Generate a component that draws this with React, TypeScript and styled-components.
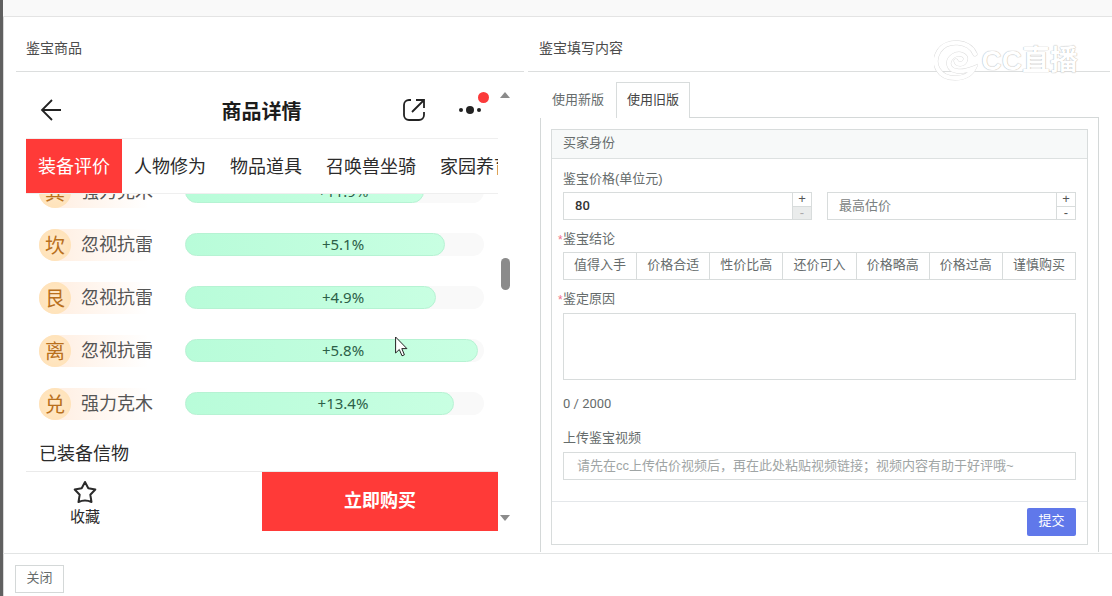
import React, { useState } from "react";
import styled, { createGlobalStyle } from "styled-components";

const GlobalStyle = createGlobalStyle`
  *, *::before, *::after { box-sizing: border-box; }
  body {
    margin: 0;
    background: #fff;
    font-family: "Liberation Sans", "Noto Sans CJK SC", sans-serif;
    font-size: 13px;
    line-height: 20px;
    color: #666c6c;
  }
  button, input, textarea { font: inherit; color: inherit; margin: 0; }
  button { cursor: pointer; }
`;

const Dialog = styled.div`
  display: flex;
  flex-direction: column;
  height: 100vh;
  border-left: 3px solid #606060;
  box-shadow: inset 1px 0 0 #d8d8d8;
`;

const TitleBar = styled.header`
  flex: none;
  height: 17px;
  background: #f9f9f9;
  border-bottom: 1px solid #e4e4e4;
`;

const Body = styled.main`
  position: relative;
  flex: 1;
  min-height: 0;
  display: grid;
  grid-template-columns: 508fr 582fr;
  gap: 4px;
  padding: 0 2px 0 13px;
  overflow: hidden;
`;

const Column = styled.section`
  min-width: 0;
  min-height: 0;
  display: flex;
  flex-direction: column;
`;

const ColumnTitle = styled.h2<{ $indent: number }>`
  flex: none;
  margin: 0;
  height: 55px;
  padding: 21px 0 0 ${(p) => p.$indent}px;
  border-bottom: 1px solid #dcdede;
  font-size: 14px;
  font-weight: 400;
  line-height: 20px;
  color: #4c4c4c;
`;

const PhoneFrame = styled.div`
  flex: 1;
  min-height: 0;
  display: flex;
  padding: 8px 12px 22px 10px;
`;

const Phone = styled.div`
  position: relative;
  flex: 1;
  min-width: 0;
  display: flex;
  flex-direction: column;
  font-family: "Noto Sans", "Noto Sans CJK SC", sans-serif;
  font-size: 18px;
  line-height: 26px;
  color: #2b2b2b;
`;

const PhoneBar = styled.div`
  flex: none;
  display: grid;
  grid-template-columns: 1fr auto 1fr;
  align-items: center;
  height: 59px;
  padding: 1px 15px 0 14px;
  border-bottom: 1px solid #efefef;
`;

const PhoneTitle = styled.h3`
  margin: 0;
  padding-top: 4px;
  font-size: 20px;
  font-weight: 700;
  line-height: 28px;
  color: #1c1c1c;
`;

const IconButton = styled.button`
  position: relative;
  display: flex;
  padding: 0;
  border: 0;
  background: none;
  color: #222;
`;

const PhoneActions = styled.div`
  display: flex;
  justify-content: flex-end;
  align-items: center;
  gap: 31px;
`;

const RedDot = styled.span`
  position: absolute;
  top: -10px;
  right: -6px;
  width: 11px;
  height: 11px;
  border-radius: 50%;
  background: #fb3a3a;
`;

const PhoneTabs = styled.nav`
  flex: none;
  display: flex;
  height: 55px;
  overflow: hidden;
  border-bottom: 1px solid #efefef;
`;

const PhoneTab = styled.button<{ $active?: boolean }>`
  flex: none;
  padding: 0 12px;
  border: 0;
  white-space: nowrap;
  background: ${(p) => (p.$active ? "#ff3a38" : "transparent")};
  color: ${(p) => (p.$active ? "#fff" : "#2b2b2b")};
`;

const StatList = styled.div`
  flex: 1;
  min-height: 0;
  display: flex;
  flex-direction: column;
  justify-content: flex-end;
  overflow: hidden;
  padding: 0 14px 0 13px;
`;

const StatRow = styled.div`
  flex: none;
  display: flex;
  align-items: center;
  height: 53px;
`;

const StatName = styled.div`
  flex: none;
  display: flex;
  align-items: center;
  gap: 10px;
  width: 146px;
  height: 32px;
  border-radius: 16px;
  background: linear-gradient(to right, #fff1e6 20%, #fff 75%);
  line-height: 32px;
  color: #555;
`;

const StatLabel = styled.span`
  padding-bottom: 2px;
`;

const Trigram = styled.span`
  width: 32px;
  height: 32px;
  padding-top: 1px;
  border-radius: 50%;
  background: radial-gradient(#ffe9c8, #ffe0b4);
  text-align: center;
  font-size: 20px;
  line-height: 32px;
  color: #b9701c;
`;

const Track = styled.div`
  position: relative;
  flex: 1;
  height: 23px;
  border-radius: 12px;
  background: #f9f9f9;
`;

const Fill = styled.div`
  height: 100%;
  border: 1px solid #b6f3d3;
  border-radius: 12px;
  background: linear-gradient(to right, #b8fcd9, #c8ffe2);
`;

const Percent = styled.span`
  position: absolute;
  inset: 0;
  padding-left: 17px;
  text-align: center;
  font-size: 15px;
  line-height: 23px;
  color: #2c6048;
`;

const SubHeading = styled.h4`
  flex: none;
  margin: 0;
  height: 41px;
  padding-top: 10px;
  font-size: 18px;
  font-weight: 400;
`;

const BuyBar = styled.div`
  flex: none;
  display: grid;
  grid-template-columns: 1fr 1fr;
  height: 60px;
  border-top: 1px solid #eaeaea;
`;

const Favourite = styled.button`
  justify-self: start;
  display: flex;
  flex-direction: column;
  align-items: center;
  gap: 2px;
  width: 118px;
  padding: 8px 0 0;
  border: 0;
  background: none;
  font-size: 15px;
  line-height: 20px;
`;

const BuyButton = styled.button`
  padding: 0 0 3px;
  border: 0;
  background: #ff3a38;
  color: #fff;
  font-weight: 700;
`;

const Cursor = styled.svg`
  position: absolute;
  left: 369px;
  top: 256px;
`;

const Scrollbar = styled.div`
  flex: none;
  display: flex;
  flex-direction: column;
  align-items: center;
  width: 14px;
  padding: 12px 0 10px;
`;

const Gap = styled.span<{ $grow: number }>`
  flex: ${(p) => p.$grow};
`;

const Thumb = styled.span`
  width: 9px;
  height: 32px;
  border-radius: 5px;
  background: #8b8b8b;
`;

const FormArea = styled.div`
  flex: 1;
  min-height: 0;
  display: flex;
  flex-direction: column;
  padding: 10px 11px 1px 12px;
  overflow: hidden;
`;

const Tabs = styled.div`
  flex: none;
  display: flex;
  height: 36px;
`;

const Tab = styled.button<{ $active?: boolean }>`
  position: relative;
  z-index: ${(p) => (p.$active ? 1 : 0)};
  width: ${(p) => (p.$active ? 74 : 76)}px;
  padding: 0 0 2px;
  border: 1px solid ${(p) => (p.$active ? "#d8dcdc" : "transparent")};
  border-bottom: 0;
  background: #fff;
  color: ${(p) => (p.$active ? "#444" : "#666c6c")};
`;

const TabPanel = styled.div`
  flex: 1;
  min-height: 0;
  margin-top: -1px;
  padding: 11px 10px 0;
  border: 1px solid #d4d8d8;
  border-bottom: 0;
`;

const Card = styled.form`
  border: 1px solid #d8dcdc;
`;

const CardHeader = styled.div`
  height: 29px;
  padding: 3px 11px;
  background: #f7f9f9;
  border-bottom: 1px solid #dde1e1;
`;

const Fields = styled.div`
  padding: 10px 11px 21px;
`;

const Label = styled.label<{ $required?: boolean }>`
  position: relative;
  display: block;
  height: 20px;
  &::before {
    content: "${(p) => (p.$required ? "*" : "")}";
    position: absolute;
    left: -5px;
    top: 1px;
    color: #f0708a;
    font-size: 12px;
  }
`;

const PriceRow = styled.div`
  display: grid;
  grid-template-columns: 1fr 1fr;
  gap: 15px;
  margin: 3px 0 9px;
`;

const NumberBox = styled.div`
  display: flex;
  height: 28px;
  border: 1px solid #d8dcdc;
`;

const NumberInput = styled.input`
  flex: 1;
  min-width: 0;
  padding: 0 11px;
  border: 0;
  outline: 0;
  background: none;
  font-family: Roboto, "Noto Sans CJK SC", sans-serif;
  font-weight: 500;
  color: #333;
  &::placeholder { color: #7c8282; opacity: 1; font-weight: 400; }
`;

const Steps = styled.div`
  display: flex;
  flex-direction: column;
  width: 19px;
  border-left: 1px solid #d8dcdc;
`;

const Step = styled.button<{ $muted?: boolean }>`
  flex: 1;
  padding: 0;
  border: 0;
  background: ${(p) => (p.$muted ? "#eaecec" : "transparent")};
  color: ${(p) => (p.$muted ? "#aaa" : "#555")};
  line-height: 12px;
  & + & { border-top: 1px solid #d8dcdc; }
`;

const Choices = styled.div`
  display: flex;
  margin: 3px 0 9px;
  border: 1px solid #d8dcdc;
`;

const Choice = styled.button<{ $selected?: boolean }>`
  flex: 1;
  height: 26px;
  padding: 0 0 2px;
  border: 0;
  background: ${(p) => (p.$selected ? "#eef1ff" : "#fff")};
  white-space: nowrap;
  & + & { border-left: 1px solid #d8dcdc; }
`;

const Reason = styled.textarea`
  display: block;
  width: 100%;
  height: 67px;
  margin: 4px 0 14px;
  padding: 4px 11px;
  border: 1px solid #d8dcdc;
  outline: 0;
  resize: none;
`;

const Counter = styled.div`
  margin-bottom: 14px;
  font-family: Roboto, sans-serif;
`;

const LinkInput = styled.input`
  display: block;
  width: 100%;
  height: 28px;
  margin-top: 4px;
  padding: 0 13px 2px;
  border: 1px solid #d8dcdc;
  outline: 0;
  &::placeholder { color: #a0a5a5; opacity: 1; }
`;

const CardFooter = styled.div`
  display: flex;
  justify-content: flex-end;
  padding: 6px 11px 8px;
  border-top: 1px solid #e4e7ea;
`;

const Submit = styled.button`
  width: 49px;
  height: 28px;
  padding: 0 0 2px;
  border: 0;
  border-radius: 2px;
  background: #6078ea;
  color: #fff;
`;

const DialogFooter = styled.footer`
  flex: none;
  height: 43px;
  padding: 11px 12px 0;
  border-top: 1px solid #e2e4e4;
`;

const CloseButton = styled.button`
  width: 49px;
  height: 28px;
  padding: 0 0 3px;
  border: 1px solid #d4d8d8;
  background: #fff;
`;

const Watermark = styled.div`
  position: absolute;
  top: 22px;
  right: 34px;
  display: flex;
  align-items: center;
  gap: 4px;
  height: 44px;
  font-size: 28px;
  font-weight: 700;
  line-height: 36px;
  color: #fff;
  text-shadow: 0 0 1px #aaa, 0 0 1px #ccc;
  pointer-events: none;
`;

const stats = [
  { gua: "巽", name: "强力克木", value: "+11.9%", fill: 80 },
  { gua: "坎", name: "忽视抗雷", value: "+5.1%", fill: 87 },
  { gua: "艮", name: "忽视抗雷", value: "+4.9%", fill: 84 },
  { gua: "离", name: "忽视抗雷", value: "+5.8%", fill: 98 },
  { gua: "兑", name: "强力克木", value: "+13.4%", fill: 90 },
];

const phoneTabs = ["装备评价", "人物修为", "物品道具", "召唤兽坐骑", "家园养育"];
const verdicts = ["值得入手", "价格合适", "性价比高", "还价可入", "价格略高", "价格过高", "谨慎购买"];

function ProductPanel() {
  return (
    <Column>
      <ColumnTitle $indent={10}>鉴宝商品</ColumnTitle>
      <PhoneFrame>
        <Phone>
          <PhoneBar>
            <IconButton type="button" aria-label="返回">
              <svg width="22" height="22" viewBox="0 0 22 22" fill="none" stroke="currentColor" strokeWidth="1.8">
                <path d="M21 11H2M12 1 2 11l10 10" />
              </svg>
            </IconButton>
            <PhoneTitle>商品详情</PhoneTitle>
            <PhoneActions>
              <IconButton type="button" aria-label="分享">
                <svg width="24" height="24" viewBox="0 0 24 24" fill="none" stroke="currentColor" strokeWidth="1.800">
                  <path d="M9 2H7a5 5 0 0 0-5 5v10a5 5 0 0 0 5 5h10a5 5 0 0 0 5-5v-3M14 2h8v8M22 2 10 14" />
                </svg>
              </IconButton>
              <IconButton type="button" aria-label="更多">
                <svg width="26" height="16" viewBox="0 0 26 16" fill="currentColor">
                  <circle cx="4" cy="8" r="2" />
                  <circle cx="13" cy="8" r="4" />
                  <circle cx="22" cy="8" r="2" />
                </svg>
                <RedDot />
              </IconButton>
            </PhoneActions>
          </PhoneBar>
          <PhoneTabs>
            {phoneTabs.map((t, i) => (
              <PhoneTab key={t} type="button" $active={i === 0}>{t}</PhoneTab>
            ))}
          </PhoneTabs>
          <StatList>
            {stats.map((s) => (
              <StatRow key={s.gua}>
                <StatName>
                  <Trigram>{s.gua}</Trigram>
                  <StatLabel>{s.name}</StatLabel>
                </StatName>
                <Track>
                  <Fill style={{ width: `${s.fill}%` }} />
                  <Percent>{s.value}</Percent>
                </Track>
              </StatRow>
            ))}
            <SubHeading>已装备信物</SubHeading>
          </StatList>
          <BuyBar>
            <Favourite type="button">
              <svg width="24" height="24" viewBox="0 0 24 24" fill="none" stroke="currentColor" strokeWidth="2" strokeLinejoin="round">
                <path d="m12 2 3.300 6.300 7 1.200-5 5.200 1.200 7.300c-4.300-1.900-8.700-1.900-13 0l1.200-7.300-5-5.200 7-1.200z" />
              </svg>
              收藏
            </Favourite>
            <BuyButton type="button">立即购买</BuyButton>
          </BuyBar>
          <Cursor width="13" height="21" viewBox="0 0 13 21" fill="#fff" stroke="#222" strokeWidth="1">
            <path d="M.6 1v16l3.700-3.500 2.700 6.300 2.400-1-2.600-6.200h5.100z" />
          </Cursor>
        </Phone>
        <Scrollbar aria-hidden="true">
          <svg width="10" height="6" viewBox="0 0 10 6"><path d="M0 6 5 0l5 6z" fill="#8b8b8b" /></svg>
          <Gap $grow={160} />
          <Thumb />
          <Gap $grow={226} />
          <svg width="10" height="6" viewBox="0 0 10 6"><path d="M0 0h10L5 6z" fill="#8b8b8b" /></svg>
        </Scrollbar>
      </PhoneFrame>
    </Column>
  );
}

function AppraisalPanel() {
  const [low, setLow] = useState("80");
  const [high, setHigh] = useState("");
  const [verdict, setVerdict] = useState("");
  const [reason, setReason] = useState("");
  const step = (v: string, d: number) => String(Math.max(0, Number(v || 0) + d));

  return (
    <Column>
      <ColumnTitle $indent={11}>鉴宝填写内容</ColumnTitle>
      <FormArea>
        <Tabs>
          <Tab type="button">使用新版</Tab>
          <Tab type="button" $active>使用旧版</Tab>
        </Tabs>
        <TabPanel>
          <Card onSubmit={(e) => e.preventDefault()}>
            <CardHeader>买家身份</CardHeader>
            <Fields>
              <Label htmlFor="low">鉴宝价格(单位元)</Label>
              <PriceRow>
                <NumberBox>
                  <NumberInput id="low" inputMode="numeric" value={low} onChange={(e) => setLow(e.target.value)} />
                  <Steps>
                    <Step type="button" aria-label="增加" onClick={() => setLow(step(low, 1))}>+</Step>
                    <Step type="button" aria-label="减少" $muted onClick={() => setLow(step(low, -1))}>-</Step>
                  </Steps>
                </NumberBox>
                <NumberBox>
                  <NumberInput aria-label="最高估价" inputMode="numeric" placeholder="最高估价" value={high} onChange={(e) => setHigh(e.target.value)} />
                  <Steps>
                    <Step type="button" aria-label="增加" onClick={() => setHigh(step(high, 1))}>+</Step>
                    <Step type="button" aria-label="减少" onClick={() => setHigh(step(high, -1))}>-</Step>
                  </Steps>
                </NumberBox>
              </PriceRow>
              <Label as="div" id="verdict" $required>鉴宝结论</Label>
              <Choices role="group" aria-labelledby="verdict">
                {verdicts.map((v) => (
                  <Choice key={v} type="button" $selected={v === verdict} onClick={() => setVerdict(v)}>{v}</Choice>
                ))}
              </Choices>
              <Label htmlFor="reason" $required>鉴定原因</Label>
              <Reason id="reason" maxLength={2000} value={reason} onChange={(e) => setReason(e.target.value)} />
              <Counter>{reason.length} / 2000</Counter>
              <Label htmlFor="video">上传鉴宝视频</Label>
              <LinkInput id="video" type="text" placeholder="请先在cc上传估价视频后，再在此处粘贴视频链接；视频内容有助于好评哦~" />
            </Fields>
            <CardFooter>
              <Submit type="submit">提交</Submit>
            </CardFooter>
          </Card>
        </TabPanel>
      </FormArea>
    </Column>
  );
}

export default function App() {
  return (
    <>
      <GlobalStyle />
      <Dialog>
        <TitleBar />
        <Body>
          <ProductPanel />
          <AppraisalPanel />
          <Watermark>
            <svg width="44" height="42" viewBox="0 0 44 42" fill="none" strokeLinecap="round">
              <path d="M41 14C35 0 13-1 5 11c-8 13 0 27 16 27 9 0 16-4 19-10-5 2-11 4-17 3-9-1-11-10-4-15 6-4 15-1 12 5-2 4-8 4-9 0" stroke="#dcdcdc" strokeWidth="5" />
              <path d="M41 14C35 0 13-1 5 11c-8 13 0 27 16 27 9 0 16-4 19-10-5 2-11 4-17 3-9-1-11-10-4-15 6-4 15-1 12 5-2 4-8 4-9 0" stroke="#fff" strokeWidth="4" />
            </svg>
            <span>CC直播</span>
          </Watermark>
        </Body>
        <DialogFooter>
          <CloseButton type="button">关闭</CloseButton>
        </DialogFooter>
      </Dialog>
    </>
  );
}
